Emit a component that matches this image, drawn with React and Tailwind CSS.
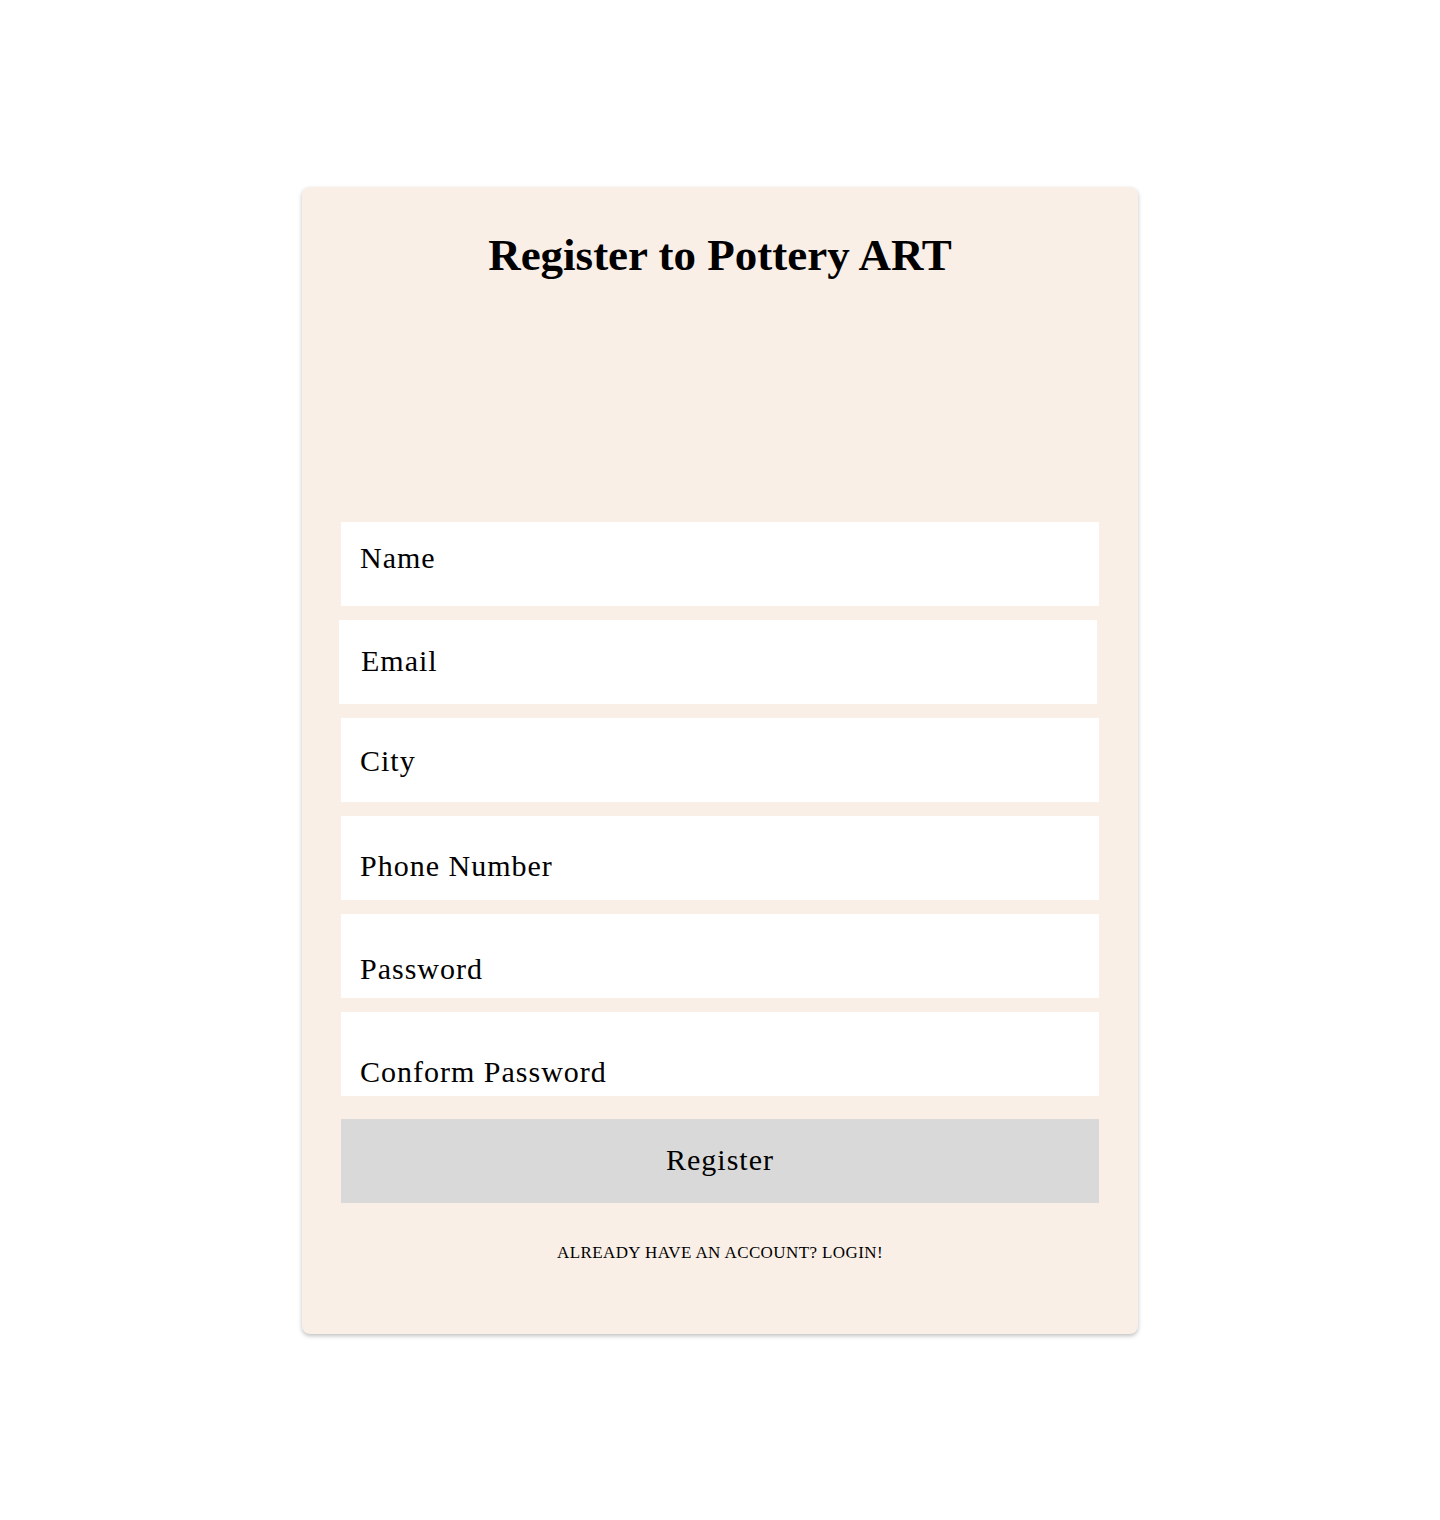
import React from 'react'

const fields = [
    { label: 'Name', pad: 'pt-[18px] pl-[19px]', shift: '' },
    { label: 'Email', pad: 'pt-[23px] pl-[22px]', shift: '-ml-0.5' },
    { label: 'City', pad: 'pt-[25px] pl-[19px]', shift: '' },
    { label: 'Phone Number', pad: 'pt-[32px] pl-[19px]', shift: '' },
    { label: 'Password', pad: 'pt-[37px] pl-[19px]', shift: '' },
    { label: 'Conform Password', pad: 'pt-[42px] pl-[19px]', shift: '' },
];

function App() {
    return (
        <div className='w-full min-h-[1520px] bg-white pt-[187px] font-["Liberation_Serif",serif] text-black'>
            <div className='mx-auto w-[836px] rounded-lg bg-[#f9efe7] px-[39px] pt-[41px] pb-[71px] shadow-[0_2px_4px_rgba(0,0,0,0.25)]'>
                <h1 className='text-center text-[45px] font-bold leading-[54px]'>Register to Pottery ART</h1>
                <form className='mt-[240px] flex flex-col gap-[14px]' onSubmit={(e) => e.preventDefault()}>
                    {fields.map((f) => (
                        <div key={f.label} className={`h-[84px] w-[758px] bg-white ${f.pad} ${f.shift}`}>
                            <span className='block text-[30px] leading-[36px] tracking-[1px]'>{f.label}</span>
                        </div>
                    ))}
                    <button type='submit' className='mt-[9px] h-[84px] w-full bg-[#d9d9d9] pb-[3px] text-[30px] leading-[36px] tracking-[1px]'>
                        Register
                    </button>
                </form>
                <p className='mt-[40px] text-center text-[17px] leading-[20px] tracking-[0.4px] uppercase'>
                    Already have an account? Login!
                </p>
            </div>
        </div>
    )
}

export default App
